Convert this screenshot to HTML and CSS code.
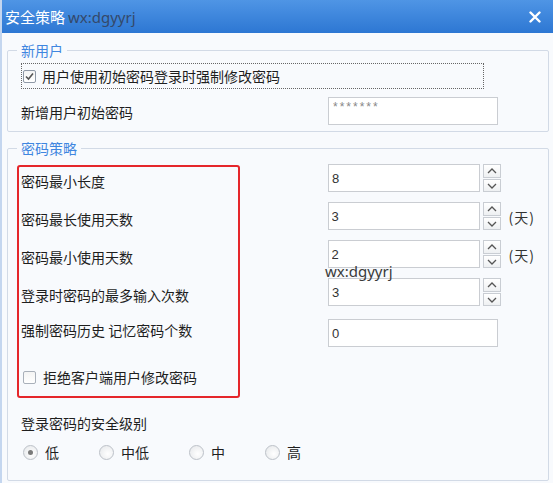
FILE: index.html
```html
<!DOCTYPE html>
<html lang="zh-CN">
<head>
    <meta charset="UTF-8">
    <meta name="viewport" content="width=device-width, initial-scale=1.0">
    <title>安全策略</title>
    <link rel="stylesheet" href="styles.css">
</head>
<body>
    <div class="dialog">
        <div class="titlebar">
            <span class="title">安全策略</span>
            <span class="title-mark">wx:dgyyrj</span>
            <span class="close">
                <svg width="12" height="12" viewBox="0 0 12 12"><path d="M1.5 1.5 L10.5 10.5 M10.5 1.5 L1.5 10.5" stroke="#fff" stroke-width="2.4" stroke-linecap="round"/></svg>
            </span>
        </div>
        <div class="content">
            <fieldset class="group group-new">
                <legend>新用户</legend>
                <label class="check-row focused">
                    <span class="checkbox checked">
                        <svg width="11" height="11" viewBox="0 0 11 11"><polyline points="2,5.5 4.5,8 9,2.5" fill="none" stroke="#555" stroke-width="1.6"/></svg>
                    </span>
                    用户使用初始密码登录时强制修改密码
                </label>
                <div class="row row-pass">
                    <span class="label">新增用户初始密码</span>
                    <input class="field field-wide field-pass" type="text" value="*******" readonly>
                </div>
            </fieldset>

            <fieldset class="group group-policy">
                <legend>密码策略</legend>
                <div class="policy">
                    <div class="row">
                        <span class="label">密码最小长度</span>
                        <input class="field" type="text" value="8" readonly>
                        <span class="spin">
                            <span class="spin-btn"><svg width="16" height="12" viewBox="0 0 16 12"><polyline points="4,8 8,4 12,8" fill="none" stroke="#555" stroke-width="1.3"/></svg></span>
                            <span class="spin-btn"><svg width="16" height="12" viewBox="0 0 16 12"><polyline points="4,4 8,8 12,4" fill="none" stroke="#555" stroke-width="1.3"/></svg></span>
                        </span>
                    </div>
                    <div class="row">
                        <span class="label">密码最长使用天数</span>
                        <input class="field" type="text" value="3" readonly>
                        <span class="spin">
                            <span class="spin-btn"><svg width="16" height="12" viewBox="0 0 16 12"><polyline points="4,8 8,4 12,8" fill="none" stroke="#555" stroke-width="1.3"/></svg></span>
                            <span class="spin-btn"><svg width="16" height="12" viewBox="0 0 16 12"><polyline points="4,4 8,8 12,4" fill="none" stroke="#555" stroke-width="1.3"/></svg></span>
                        </span>
                        <span class="unit">(天)</span>
                    </div>
                    <div class="row">
                        <span class="label">密码最小使用天数</span>
                        <input class="field" type="text" value="2" readonly>
                        <span class="spin">
                            <span class="spin-btn"><svg width="16" height="12" viewBox="0 0 16 12"><polyline points="4,8 8,4 12,8" fill="none" stroke="#555" stroke-width="1.3"/></svg></span>
                            <span class="spin-btn"><svg width="16" height="12" viewBox="0 0 16 12"><polyline points="4,4 8,8 12,4" fill="none" stroke="#555" stroke-width="1.3"/></svg></span>
                        </span>
                        <span class="unit">(天)</span>
                    </div>
                    <div class="row">
                        <span class="label">登录时密码的最多输入次数</span>
                        <input class="field" type="text" value="3" readonly>
                        <span class="spin">
                            <span class="spin-btn"><svg width="16" height="12" viewBox="0 0 16 12"><polyline points="4,8 8,4 12,8" fill="none" stroke="#555" stroke-width="1.3"/></svg></span>
                            <span class="spin-btn"><svg width="16" height="12" viewBox="0 0 16 12"><polyline points="4,4 8,8 12,4" fill="none" stroke="#555" stroke-width="1.3"/></svg></span>
                        </span>
                    </div>
                    <div class="row row-history">
                        <span class="label">强制密码历史 记忆密码个数</span>
                        <input class="field field-wide" type="text" value="0" readonly>
                    </div>
                    <label class="check-row check-refuse">
                        <span class="checkbox"></span>
                        拒绝客户端用户修改密码
                    </label>
                    <!-- red annotation box drawn over the labels -->
                    <div class="mark-box"></div>
                </div>

                <div class="level-title">登录密码的安全级别</div>
                <div class="radios">
                    <label class="radio-item"><span class="radio selected"></span>低</label>
                    <label class="radio-item"><span class="radio"></span>中低</label>
                    <label class="radio-item"><span class="radio"></span>中</label>
                    <label class="radio-item"><span class="radio"></span>高</label>
                </div>
            </fieldset>
        </div>
        <div class="watermark">wx:dgyyrj</div>
    </div>
</body>
</html>
```

FILE: styles.css
```css
body {
    margin: 0;
    font-family: "Noto Sans CJK SC", "Noto Sans", sans-serif;
    font-size: 14px;
    color: #1e1e1e;
    background-color: #f8fafd;
}

.dialog {
    position: relative;
    width: 553px;
    height: 483px;
    box-sizing: border-box;
    background-color: #f8fafd;
    border-left: 2px solid #c4d6ef;
    overflow: hidden;
}

.titlebar {
    display: flex;
    align-items: center;
    height: 33px;
    margin-left: -2px;
    padding-left: 5px;
    background: linear-gradient(#4f95e5, #2d77d3);
}

.title {
    color: #fff;
    font-size: 15px;
    line-height: 20px;
}

.title-mark {
    margin-left: 3px;
    color: #34496a;
    font-family: "Noto Sans", sans-serif;
    font-size: 15px;
    line-height: 20px;
}

.close {
    display: flex;
    margin-left: auto;
    margin-right: 12px;
}

.content {
    padding: 0 4px 0 5px;
}

.group {
    margin: 0;
    padding: 0 13px 6px;
    border: 1px solid #d2dae6;
    border-radius: 2px;
    min-width: 0;
}

.group legend {
    margin-left: -4px;
    padding: 0 4px;
    color: #3f86e0;
    line-height: 18px;
}

.group-new {
    margin-top: 8px;
}

.group-policy {
    margin-top: 7px;
    padding-bottom: 18px;
}

.check-row {
    display: flex;
    align-items: center;
    gap: 6px;
    height: 20px;
    padding-left: 2px;
    line-height: 20px;
}

.check-row.focused {
    width: 460px;
    height: 24px;
    margin-top: 4px;
    border: 1px dotted #666;
    padding-left: 1px;
}

.checkbox {
    display: flex;
    align-items: center;
    justify-content: center;
    width: 13px;
    height: 13px;
    box-sizing: border-box;
    border: 1px solid #a9b0ba;
    border-radius: 2px;
    background: linear-gradient(#f4f4f4, #ffffff);
}

.checkbox.checked {
    border-color: #8e98a6;
}

.row {
    display: flex;
    align-items: center;
    height: 28px;
}

.row .label {
    width: 307px;
    line-height: 20px;
    margin-top: 6px;
}

.row-pass {
    margin-top: 8px;
}

.row-pass .label {
    margin-top: 2px;
}

.field {
    width: 152px;
    height: 28px;
    box-sizing: border-box;
    margin: 0;
    padding: 0 3px;
    border: 1px solid #cacdd2;
    background-color: #fff;
    font-family: "Liberation Sans", Arial, sans-serif;
    font-size: 13px;
    color: #333;
    outline: none;
}

.field-wide {
    width: 170px;
}

.field-pass {
    padding: 0 4px 9px;
    color: #888;
    font-size: 12px;
    letter-spacing: 2px;
}

.spin {
    display: flex;
    flex-direction: column;
    gap: 1px;
    margin-left: 3px;
}

.spin-btn {
    display: flex;
    align-items: center;
    justify-content: center;
    width: 18px;
    height: 14px;
    box-sizing: border-box;
    border: 1px solid #c9cdd3;
    background: linear-gradient(#ffffff, #eef0f2);
}

.spin-btn + .spin-btn {
    height: 13px;
}

.unit {
    margin-left: 8px;
    margin-top: 2px;
    line-height: 20px;
    letter-spacing: 1px;
    color: #333;
}

.policy {
    position: relative;
    display: flex;
    flex-direction: column;
    gap: 10px;
    padding-top: 7px;
}

.row-history {
    margin-top: 3px;
}

.row-history .label {
    margin-top: -6px;
}

.check-refuse {
    margin-top: 10px;
    gap: 7px;
}

.mark-box {
    position: absolute;
    top: 8px;
    left: -4px;
    width: 223px;
    height: 233px;
    box-sizing: border-box;
    border: 2px solid #e5262b;
    border-radius: 3px;
}

.level-title {
    margin-top: 26px;
    line-height: 20px;
}

.radios {
    display: flex;
    gap: 40px;
    margin-top: 9px;
    padding-left: 2px;
    line-height: 20px;
}

.radio-item {
    display: flex;
    align-items: center;
    gap: 7px;
}

.radio {
    display: flex;
    align-items: center;
    justify-content: center;
    width: 15px;
    height: 15px;
    box-sizing: border-box;
    border: 1px solid #bcc1c8;
    border-radius: 50%;
    background: radial-gradient(circle at 60% 60%, #ffffff, #e4e6e9);
}

.radio.selected::after {
    content: "";
    width: 5px;
    height: 5px;
    border-radius: 50%;
    background-color: #7a7a7a;
}

.watermark {
    position: absolute;
    left: 323px;
    top: 261px;
    font-family: "Noto Sans", sans-serif;
    font-size: 15px;
    line-height: 20px;
    color: #3a3a3a;
}
```
